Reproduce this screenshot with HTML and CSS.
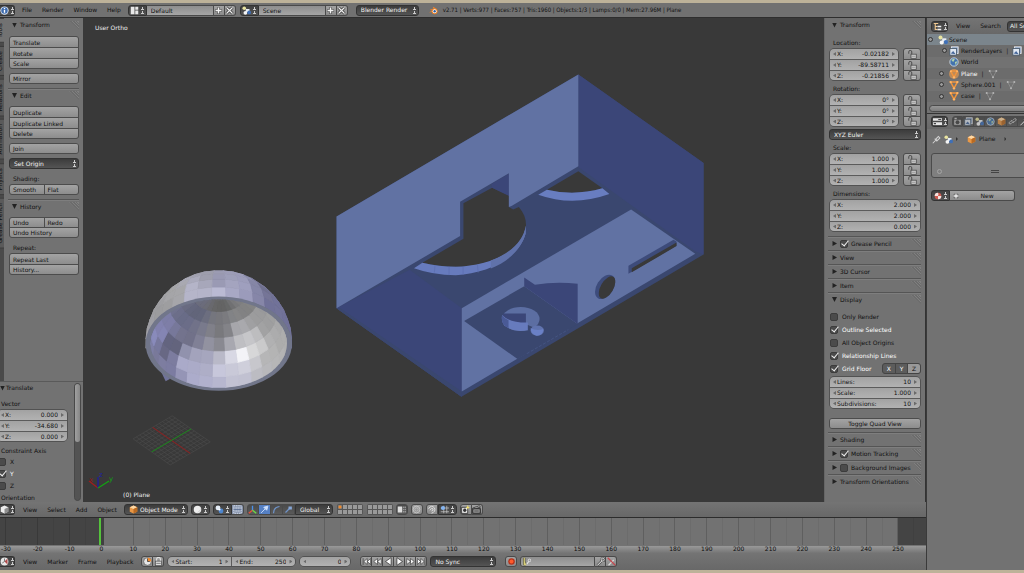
FILE: index.html
```html
<!DOCTYPE html>
<html lang="en">
<head>
<meta charset="utf-8">
<title>Blender</title>
<link rel="stylesheet" href="styles.css">
</head>
<body>
<svg class="defs" aria-hidden="true">
  <symbol id="i-info" viewBox="0 0 12 12"><circle cx="6" cy="6" r="5.500" fill="#dfe8f4"/><circle cx="6" cy="6" r="4.300" fill="#3f6cae"/><path d="M6 5.200V9M6 2.800V4.200" stroke="#fff" stroke-width="1.800"/></symbol>
  <symbol id="i-layout" viewBox="0 0 12 12"><path d="M1 1H6V11H1ZM7 1H11V5H7ZM7 6H11V11H7Z" fill="#e8e8e8"/></symbol>
  <symbol id="i-scene" viewBox="0 0 12 12"><circle cx="3" cy="3" r="2.400" fill="#e9e4a0"/><rect x="5" y="4" width="5" height="4" fill="#e9eef4"/><circle cx="4.500" cy="9" r="2.500" fill="#f4f4f4"/><circle cx="9.500" cy="8.500" r="2.500" fill="#3f70b8"/></symbol>
  <symbol id="i-plus" viewBox="0 0 12 12"><path d="M6 1.500V10.500M1.500 6H10.500" stroke="#444" stroke-width="3.600"/><path d="M6 2V10M2 6H10" stroke="#f2f2f2" stroke-width="2"/></symbol>
  <symbol id="i-x" viewBox="0 0 12 12"><path d="M2 2L10 10M10 2L2 10" stroke="#3a3a3a" stroke-width="3.600"/><path d="M2 2L10 10M10 2L2 10" stroke="#eee" stroke-width="1.600"/></symbol>
  <symbol id="i-blender" viewBox="0 0 12 12"><path d="M0 9L5 5H2V4H7L5 2L6 1L11 5Z" fill="#e8812a"/><circle cx="7.500" cy="7" r="4" fill="#e8812a"/><circle cx="7.500" cy="7" r="2.600" fill="#fff"/><circle cx="7.500" cy="7" r="1.600" fill="#2d5f9e"/></symbol>
  <symbol id="i-tree" viewBox="0 0 12 12"><path d="M1 2H7M3 2V10H6M3 6H6" stroke="#f0c890" stroke-width="1.400" fill="none"/><path d="M6 6H11M6 10H11" stroke="#eee" stroke-width="1.800"/></symbol>
  <symbol id="i-props" viewBox="0 0 12 12"><path d="M0 1.500H12V5H0ZM0 7H12V10.500H0Z" fill="#e6e6e6"/><path d="M7 3.200H11M1 8.800H4" stroke="#444" stroke-width="1.400"/></symbol>
  <symbol id="i-cube" viewBox="0 0 12 12"><path d="M6 .8L11 3V9L6 11.400L1 9V3Z" fill="#e99846"/><path d="M6 .8L11 3L6 5.400L1 3Z" fill="#ffd9a6"/><path d="M6 5.400L11 3V9L6 11.400Z" fill="#b96a22"/></symbol>
  <symbol id="i-wcube" viewBox="0 0 12 12"><path d="M6 .8L11 3V9L6 11.400L1 9V3Z" fill="#ededed"/><path d="M6 5.400L11 3V9L6 11.400Z" fill="#8d8d8d"/></symbol>
  <symbol id="i-clock" viewBox="0 0 12 12"><circle cx="6" cy="6" r="5.200" fill="#e6e6e6" stroke="#555"/><path d="M6 6V1A5 5 0 0 1 11 6Z" fill="#ef8a2e"/><path d="M6 2V6H9" stroke="#333" fill="none"/></symbol>
  <symbol id="i-timeline" viewBox="0 0 12 12"><circle cx="6" cy="6" r="5.200" fill="#e6e6e6"/><path d="M6 6L10 2V10Z" fill="#b04848"/><path d="M6 2V6L3 8" stroke="#555" fill="none"/></symbol>
  <symbol id="i-lock" viewBox="0 0 12 12"><path d="M1 5V2.500A2 2 0 0 1 5 2.500V6" stroke="#444" stroke-width="1.200" fill="none"/><rect x="4" y="5.600" width="7" height="5.400" fill="#d4d4d4" stroke="#444"/><path d="M5 8.300H10" stroke="#666" stroke-width=".8"/></symbol>
  <symbol id="i-padlock" viewBox="0 0 12 12"><path d="M3.500 6V3A2.500 2.500 0 0 1 8.500 3V6" stroke="#e4e4e4" stroke-width="1.400" fill="none"/><rect x="2" y="5.500" width="8" height="6" fill="#ddd" stroke="#555"/><path d="M3 8.500H9" stroke="#666"/></symbol>
  <symbol id="i-sphere" viewBox="0 0 12 12"><circle cx="6" cy="6" r="5" fill="#ededed"/><path d="M10 4A5 5 0 0 1 4 10Q9 9 10 4" fill="#c8c8c8"/></symbol>
  <symbol id="i-pivot" viewBox="0 0 12 12"><circle cx="4" cy="3.800" r="3.200" fill="#e4ecf6"/><circle cx="8" cy="8" r="3.200" fill="#4d86cf"/><circle cx="6" cy="6" r="1.400" fill="#fff"/></symbol>
  <symbol id="i-manip" viewBox="0 0 12 12"><rect x="1" y="1" width="10" height="10" fill="none" stroke="#e8eef8" stroke-dasharray="2 1"/><path d="M1 6H11M3 3V9M9 3V9M6 3V9" stroke="#5f7396"/><path d="M2 4H10M2 8H10" stroke="#e8eef8"/></symbol>
  <symbol id="i-axes" viewBox="0 0 12 12"><path d="M6 7V1" stroke="#4a90e8" stroke-width="1.800"/><path d="M6 7L1 11" stroke="#e8503a" stroke-width="2"/><path d="M6 7L11 11" stroke="#6cd448" stroke-width="2"/></symbol>
  <symbol id="i-arrow" viewBox="0 0 12 12"><path d="M1.500 10.500L7 5M5 3L10.500 1.500L9 7Z" stroke="#cfe0fa" stroke-width="1.200" fill="#cfe0fa"/></symbol>
  <symbol id="i-arc" viewBox="0 0 12 12"><path d="M2 11Q2 3 10 2" stroke="#6f93c8" stroke-width="1.600" fill="none"/></symbol>
  <symbol id="i-scale" viewBox="0 0 12 12"><path d="M2 10L7 5" stroke="#6f93c8" stroke-width="1.600"/><rect x="6" y="2" width="4.500" height="4" fill="#86a6d6"/></symbol>
  <symbol id="i-shade" viewBox="0 0 12 12"><rect x="1" y="2" width="6" height="8" fill="#ddd"/><path d="M9 2V10M11 2V10" stroke="#ccc" stroke-dasharray="2 1"/></symbol>
  <symbol id="i-ring" viewBox="0 0 12 12"><circle cx="6" cy="6" r="4.500" fill="none" stroke="#d0d0d0"/><circle cx="6" cy="6" r="2.200" fill="none" stroke="#c4c4c4"/></symbol>
  <symbol id="i-magnet" viewBox="0 0 12 12"><path d="M2 5Q6-1 10 4Q12 9 6 11M4 7Q6 3 8 5Q9 8 6 8" fill="none" stroke="#dcdcdc" stroke-width="1.300"/></symbol>
  <symbol id="i-snap" viewBox="0 0 12 12"><path d="M5 1V11M9 1V11M1 4H12M1 9H12" stroke="#cfcfcf" stroke-width=".9"/><circle cx="4" cy="4" r="2.800" fill="#85b4f0"/></symbol>
  <symbol id="i-cam" viewBox="0 0 12 12"><rect x="1" y="3" width="10" height="8" fill="#b9b9b9" stroke="#333"/><circle cx="6" cy="7" r="2.600" fill="#444"/><rect x="2" y="1" width="3" height="2" fill="#ccc"/></symbol>
  <symbol id="i-camx" viewBox="0 0 12 12"><rect x="1" y="3" width="8" height="8" fill="#eee" stroke="#222"/><circle cx="5" cy="7" r="2.200" fill="#333"/><path d="M9 0L10 2.500L12 3L10 4L9.500 6L8 4L6 3L8 2.500Z" fill="#f2e06a"/></symbol>
  <symbol id="i-clap" viewBox="0 0 12 12"><path d="M1 5H11V11H1Z" fill="#9d9d9d" stroke="#222" stroke-width="1.400"/><path d="M1 4L10 1L11 3L2 5Z" fill="#eee" stroke="#222"/><path d="M3 8H9" stroke="#333"/></symbol>
  <symbol id="i-first" viewBox="0 0 12 12"><path d="M1.500 1.500V10.500M7 2L2.500 6L7 10ZM11.500 2L7 6L11.500 10Z" fill="#f4f4f4" stroke="#3c3c3c" stroke-width=".9"/></symbol>
  <symbol id="i-prev" viewBox="0 0 12 12"><path d="M6 2L1 6L6 10ZM11 2L6 6L11 10Z" fill="#f4f4f4" stroke="#3c3c3c" stroke-width=".9"/></symbol>
  <symbol id="i-rev" viewBox="0 0 12 12"><path d="M9.500 .8L2 6L9.500 11.200Z" fill="#fafafa" stroke="#333"/></symbol>
  <symbol id="i-pin" viewBox="0 0 12 12"><path d="M1 11L5 7M3.500 5L7 8.500M5 5.500L8.500 2L10.500 4L7 7.500Z" stroke="#d4d4d4" stroke-width="1.400" fill="#777"/></symbol>
  <symbol id="i-rl" viewBox="0 0 12 12"><rect x="3" y="1" width="8" height="8" fill="#8ca4c8" stroke="#eee"/><rect x="1" y="3" width="8" height="8" fill="#dfe7f2" stroke="#456"/><path d="M2 9L5 6L8 10" fill="#47689c"/></symbol>
  <symbol id="i-world" viewBox="0 0 12 12"><circle cx="6" cy="6" r="5" fill="#4373ae" stroke="#d5dfea"/><path d="M3 4Q5 1 7 3L5 6ZM7 6L10 5L8 10Z" fill="#b5d3a8"/></symbol>
  <symbol id="i-mesh" viewBox="0 0 12 12"><path d="M2 2.500H10L6 10Z" fill="none" stroke="#f0943c" stroke-width="1.800"/><circle cx="2" cy="2.500" r="1.400" fill="#ffb668"/><circle cx="10" cy="2.500" r="1.400" fill="#ffb668"/><circle cx="6" cy="10" r="1.400" fill="#ffb668"/></symbol>
  <symbol id="i-gmesh" viewBox="0 0 12 12"><path d="M2 2.500H10L6 10Z" fill="none" stroke="#959595" stroke-width=".8"/><circle cx="2" cy="2.500" r="1.200" fill="#b4b4b4"/><circle cx="10" cy="2.500" r="1.200" fill="#b4b4b4"/><circle cx="6" cy="10" r="1.200" fill="#b4b4b4"/></symbol>
  <symbol id="i-mat" viewBox="0 0 12 12"><circle cx="6" cy="6" r="5" fill="#d05a50"/><path d="M6 1A5 5 0 0 1 6 6H1A5 5 0 0 1 6 1M6 6H11A5 5 0 0 1 6 11Z" fill="#f3e4e0"/></symbol>
  <symbol id="i-chain" viewBox="0 0 12 12"><path d="M1 8L4 5Q6 4 7 6L4 9Q2 10 1 8M5 6Q6 8 8 7L11 4Q11 2 9 2L7 4" fill="none" stroke="#c8c8c8" stroke-width="1.200"/></symbol>
  <symbol id="i-key" viewBox="0 0 12 12"><path d="M2 11L8 5" stroke="#444" stroke-width="3"/><circle cx="9" cy="3.500" r="2" fill="none" stroke="#444" stroke-width="2.600"/><path d="M2 11L8 5" stroke="#e8e8e8" stroke-width="1.400"/><circle cx="9" cy="3.500" r="2" fill="none" stroke="#e8e8e8" stroke-width="1.200"/></symbol>
  <symbol id="i-ykey" viewBox="0 0 12 12"><path d="M3 1V11M3 6L5 11" stroke="#4c4a30" stroke-width="3"/><path d="M3 1V11M3 6L5 11" stroke="#d8cf7c" stroke-width="1.600"/><path d="M6 10L9 6" stroke="#eee" stroke-width="1.400"/><circle cx="10" cy="4.500" r="1.700" fill="none" stroke="#eee"/></symbol>
  <symbol id="i-keyx" viewBox="0 0 12 12"><path d="M2 11L9 4" stroke="#ddd" stroke-width="1.500"/><path d="M1 1L11 11" stroke="#c4484e" stroke-width="1.700"/></symbol>
  <symbol id="i-rec" viewBox="0 0 12 12"><circle cx="6" cy="6" r="4.400" fill="#b5331c"/><circle cx="6" cy="6" r="2.600" fill="#ff5a2b"/></symbol>
</svg>

<div class="app">
<header class="bar topbar">
  <button class="dark ed" aria-label="Editor type"><svg><use href="#i-info"/></svg><i class="ud"></i></button>
  <nav class="menus"><a href="#">File</a><a href="#">Render</a><a href="#">Window</a><a href="#">Help</a></nav>
  <div class="join id-block"><button class="dark sel" aria-label="Screen layout"><svg><use href="#i-layout"/></svg><i class="ud"></i></button><input class="field" aria-label="Layout name" value="Default"><button class="ico" aria-label="Add layout"><svg><use href="#i-plus"/></svg></button><button class="ico" aria-label="Delete layout"><svg><use href="#i-x"/></svg></button></div>
  <div class="join id-block"><button class="dark sel" aria-label="Scene list"><svg><use href="#i-scene"/></svg><i class="ud"></i></button><input class="field" aria-label="Scene name" value="Scene"><button class="ico" aria-label="Add scene"><svg><use href="#i-plus"/></svg></button><button class="ico" aria-label="Delete scene"><svg><use href="#i-x"/></svg></button></div>
  <span class="pick engine"><select aria-label="Render engine"><option>Blender Render</option></select><i class="ud"></i></span>
  <svg class="logo"><use href="#i-blender"/></svg>
  <span class="stats">v2.71 | Verts:977 | Faces:757 | Tris:1960 | Objects:1/3 | Lamps:0/0 | Mem:27.96M | Plane</span>
</header>

<main class="dock">
<div class="left">
  <div class="workspace">
    <aside class="shelf">
      <div class="shelf-top">
        <nav class="tabs"><a href="#" class="on">Tools</a><a href="#">Create</a><a href="#">Relations</a><a href="#">Animation</a><a href="#">Physics</a><a href="#">Grease Pencil</a></nav>
        <div class="panels">
          <section class="panel"><h2>Transform</h2><div class="body">
            <div class="stack"><button>Translate</button><button>Rotate</button><button>Scale</button></div>
            <div class="stack"><button>Mirror</button></div>
          </div></section>
          <section class="panel"><h2>Edit</h2><div class="body">
            <div class="stack"><button>Duplicate</button><button>Duplicate Linked</button><button>Delete</button></div>
            <div class="stack"><button>Join</button></div>
            <span class="pick"><select aria-label="Set Origin"><option>Set Origin</option></select><i class="ud"></i></span>
            <div><p class="cap">Shading:</p>
            <div class="stack two"><button>Smooth</button><button>Flat</button></div></div>
          </div></section>
          <section class="panel"><h2>History</h2><div class="body">
            <div class="stack two"><button>Undo</button><button>Redo</button><button class="wide">Undo History</button></div>
            <div><p class="cap">Repeat:</p>
            <div class="stack"><button>Repeat Last</button><button>History...</button></div></div>
          </div></section>
        </div>
      </div>
      <section class="operator">
        <div class="op-main"><h2>Translate</h2>
          <p class="cap">Vector</p>
          <div class="nums"><label><span>X:</span><input value="0.000"></label><label><span>Y:</span><input value="-34.680"></label><label><span>Z:</span><input value="0.000"></label></div>
          <p class="cap">Constraint Axis</p>
          <label class="chk"><input type="checkbox"><span>X</span></label>
          <label class="chk"><input type="checkbox" checked><span>Y</span></label>
          <label class="chk"><input type="checkbox"><span>Z</span></label>
          <p class="cap">Orientation</p>
        </div>
        <div class="scroll"><i></i></div>
      </section>
    </aside>

    <svg class="scene" viewBox="83 18 741 483" preserveAspectRatio="xMinYMin slice" role="img" aria-label="3D viewport">
      <g id="floor"></g>
      <path d="M160 369L165.500 380.500L170 378Z" fill="#70739a"/>
      <g id="dome"></g>
      <g transform="translate(325 60) scale(.3333)">
        <path d="M757 43L1132 308V582L407 1008L33 743V468Z" fill="#3a476f"/>
        <path d="M757 43L1132 308V582L1107 572L757 320Z" fill="#3b4678"/>
        <path d="M33 743L252 628L408 743V1008Z" fill="#3b4678"/>
        <path d="M33 743L407 1008L408 992L45 743Z" fill="#3a476f"/>
        <path d="M413 429L499 382L549 406V440L562 447L579 440C596 460 602 480 600 500C585 570 500 615 400 619Q340 619 290 607L413 535Z" fill="#393939"/>
        <path d="M499 382L549 406V340L497 371Z" fill="#3b4678"/>
        <path d="M290 607Q340 619 390 619C500 615 592 570 600 495L599 520C580 590 490 640 390 644Q320 643 265 623Z" fill="#677bbd"/>
        <path d="M495 600C560 575 592 540 600 495L599 520C582 575 540 605 495 624Z" fill="#6072aa"/>
        <path d="M328 614L326 636M370 619V644M412 618V643M455 612L457 636" stroke="#5b6eae" stroke-width="2"/>
        <path d="M757 333L829 384Q745 408 663 388Z" fill="#393939"/>
        <path d="M663 388Q745 408 829 384L850 401Q740 440 637 403Z" fill="#687dc0"/>
        <path d="M33 468L757 43V318L557 437L549 440V339L403 424V527L33 743Z" fill="#6172a3"/>
        <path d="M408 743L915 447L1107 580L408 992Z" fill="#6172a3"/>
        <path d="M415 781L595 677L755 790L575 895Z" fill="#3a476f"/>
        <path d="M595 651L627 673Q690 662 755 670V790L595 677Z" fill="#3b4678"/>
        <path d="M603 879L727 807" stroke="#4a5a8a" stroke-width="2" stroke-dasharray="9 5"/>
        <ellipse cx="585" cy="775" rx="56" ry="36" fill="#5c6ea2"/>
        <path d="M532 759H600V788Q560 793 530 775Z" fill="#3b4678"/>
        <path d="M529 763Q550 787 606 786V808Q570 819 535 795Q525 780 529 763Z" fill="#677bbd"/>
        <path d="M529 763Q535 773 548 779V803Q522 790 529 763Z" fill="#4a5a96"/>
        <path d="M606 793L620 799L622 810L606 808Z" fill="#3a476f"/>
        <ellipse cx="634" cy="810" rx="20" ry="15" fill="#6073ae"/><path d="M614 803Q634 812 652 805Q652 825 632 825Q616 822 614 803Z" fill="#6a80c6"/>
        <ellipse cx="837" cy="679" rx="25" ry="40" transform="rotate(32 837 679)" fill="#3d4c7c"/>
        <ellipse cx="843" cy="681" rx="19" ry="37" transform="rotate(30 843 681)" fill="#393939"/>
        <path d="M907 616L1042 538L1051 543V556L907 640Z" fill="#3d4b7a"/>
        <path d="M917 623L1051 546V557L917 635Z" fill="#393939"/>
      </g>
      <g fill="none" stroke-width="1.200"><path d="M98 487L89 480" stroke="#a31d1d"/><path d="M98 487V476" stroke="#1c1ca8"/><path d="M98 487L109 480" stroke="#12a512"/></g>
      <g class="axis"><text x="89" y="481" fill="#8f1c1c">x</text><text x="99" y="476" fill="#2020a8">z</text><text x="109" y="480" fill="#12a512">y</text></g>
      <g class="hud"><text x="95" y="30">User Ortho</text><text x="123" y="496">(0) Plane</text></g>
    </svg>

    <aside class="side">
      <section class="panel"><h2>Transform</h2><div class="body tight">
        <p class="cap">Location:</p>
        <div class="locked"><div class="nums"><label><span>X:</span><input value="-0.02182"></label><label><span>Y:</span><input value="-89.58711"></label><label><span>Z:</span><input value="-0.21856"></label></div>
        <div class="stack locks"><button aria-label="Lock X"><svg><use href="#i-lock"/></svg></button><button aria-label="Lock Y"><svg><use href="#i-lock"/></svg></button><button aria-label="Lock Z"><svg><use href="#i-lock"/></svg></button></div></div>
        <p class="cap gap">Rotation:</p>
        <div class="locked"><div class="nums"><label><span>X:</span><input value="0°"></label><label><span>Y:</span><input value="0°"></label><label><span>Z:</span><input value="0°"></label></div>
        <div class="stack locks"><button aria-label="Lock X"><svg><use href="#i-lock"/></svg></button><button aria-label="Lock Y"><svg><use href="#i-lock"/></svg></button><button aria-label="Lock Z"><svg><use href="#i-lock"/></svg></button></div></div>
        <span class="pick gap"><select aria-label="Rotation mode"><option>XYZ Euler</option></select><i class="ud"></i></span>
        <p class="cap gap">Scale:</p>
        <div class="locked"><div class="nums"><label><span>X:</span><input value="1.000"></label><label><span>Y:</span><input value="1.000"></label><label><span>Z:</span><input value="1.000"></label></div>
        <div class="stack locks"><button aria-label="Lock X"><svg><use href="#i-lock"/></svg></button><button aria-label="Lock Y"><svg><use href="#i-lock"/></svg></button><button aria-label="Lock Z"><svg><use href="#i-lock"/></svg></button></div></div>
        <p class="cap gap">Dimensions:</p>
        <div class="nums"><label><span>X:</span><input value="2.000"></label><label><span>Y:</span><input value="2.000"></label><label><span>Z:</span><input value="0.000"></label></div>
      </div></section>
      <section class="panel shut"><h2><label class="chk"><input type="checkbox" checked><span>Grease Pencil</span></label></h2></section>
      <section class="panel shut"><h2>View</h2></section>
      <section class="panel shut"><h2>3D Cursor</h2></section>
      <section class="panel shut"><h2>Item</h2></section>
      <section class="panel"><h2>Display</h2><div class="body tight display">
        <label class="chk"><input type="checkbox"><span>Only Render</span></label>
        <label class="chk"><input type="checkbox" checked><span>Outline Selected</span></label>
        <label class="chk"><input type="checkbox"><span>All Object Origins</span></label>
        <label class="chk"><input type="checkbox" checked><span>Relationship Lines</span></label>
        <div class="floor-row"><label class="chk"><input type="checkbox" checked><span>Grid Floor</span></label><div class="xyz"><button class="on">X</button><button class="on">Y</button><button>Z</button></div></div>
        <div class="nums"><label><span>Lines:</span><input value="10"></label><label><span>Scale:</span><input value="1.000"></label><label><span>Subdivisions:</span><input value="10"></label></div>
        <div class="stack quad"><button>Toggle Quad View</button></div>
      </div></section>
      <section class="panel shut"><h2>Shading</h2></section>
      <section class="panel shut"><h2><label class="chk"><input type="checkbox" checked><span>Motion Tracking</span></label></h2></section>
      <section class="panel shut"><h2><label class="chk"><input type="checkbox"><span>Background Images</span></label></h2></section>
      <section class="panel shut"><h2>Transform Orientations</h2></section>
    </aside>
  </div>

  <div class="bar viewbar">
    <button class="dark ed" aria-label="Editor type"><svg><use href="#i-wcube"/></svg><i class="ud"></i></button>
    <nav class="menus"><a href="#">View</a><a href="#">Select</a><a href="#">Add</a><a href="#">Object</a></nav>
    <span class="pick mode"><svg><use href="#i-cube"/></svg><select aria-label="Mode"><option>Object Mode</option></select><i class="ud"></i></span>
    <button class="dark sel" aria-label="Viewport shading"><svg><use href="#i-sphere"/></svg><i class="ud"></i></button>
    <div class="join pivot"><button class="dark sel" aria-label="Pivot"><svg><use href="#i-pivot"/></svg><i class="ud"></i></button><button class="ico blue" aria-label="Manipulate centers"><svg><use href="#i-manip"/></svg></button></div>
    <div class="join"><button class="ico dk" aria-label="Manipulator"><svg><use href="#i-axes"/></svg></button><button class="ico blue" aria-label="Translate"><svg><use href="#i-arrow"/></svg></button><button class="ico dk" aria-label="Rotate"><svg><use href="#i-arc"/></svg></button><button class="ico dk" aria-label="Scale"><svg><use href="#i-scale"/></svg></button><span class="pick orient"><select aria-label="Orientation"><option>Global</option></select><i class="ud"></i></span></div>
    <div class="layers"><i class="dot"></i><i></i><i></i><i></i><i></i><i></i><i></i><i></i><i></i><i></i></div>
    <div class="layers"><i></i><i></i><i></i><i></i><i></i><i></i><i></i><i></i><i></i><i></i></div>
    <div class="join"><button class="ico dk" aria-label="Lock camera"><svg><use href="#i-shade"/></svg></button></div>
    <div class="join"><button class="ico" aria-label="Proportional edit"><svg><use href="#i-ring"/></svg></button></div>
    <div class="join"><button class="ico" aria-label="Snap"><svg><use href="#i-magnet"/></svg></button><button class="dark sel" aria-label="Snap element"><svg><use href="#i-snap"/></svg><i class="ud"></i></button></div>
    <div class="join"><button class="ico" aria-label="Render image"><svg><use href="#i-camx"/></svg></button><button class="ico" aria-label="Render animation"><svg><use href="#i-clap"/></svg></button></div>
  </div>

  <div class="timeline"><div class="ticks" id="ticks"></div></div>

  <div class="bar timebar">
    <button class="dark ed" aria-label="Editor type"><svg><use href="#i-timeline"/></svg><i class="ud"></i></button>
    <nav class="menus"><a href="#">View</a><a href="#">Marker</a><a href="#">Frame</a><a href="#">Playback</a></nav>
    <div class="join"><button class="ico" aria-label="Preview range"><svg><use href="#i-clock"/></svg></button><button class="ico" aria-label="Lock time"><svg><use href="#i-padlock"/></svg></button></div>
    <div class="nums range"><label><span>Start:</span><input value="1"></label><label><span>End:</span><input value="250"></label></div>
    <div class="nums frame"><label><input aria-label="Current frame" value="0"></label></div>
    <div class="join play"><button class="ico" aria-label="First"><svg><use href="#i-first"/></svg></button><button class="ico" aria-label="Previous key"><svg><use href="#i-prev"/></svg></button><button class="ico" aria-label="Play reverse"><svg><use href="#i-rev"/></svg></button><button class="ico flip" aria-label="Play"><svg><use href="#i-rev"/></svg></button><button class="ico flip" aria-label="Next key"><svg><use href="#i-prev"/></svg></button><button class="ico flip" aria-label="Last"><svg><use href="#i-first"/></svg></button></div>
    <span class="pick sync"><select aria-label="Sync"><option>No Sync</option></select><i class="ud"></i></span>
    <div class="join rec"><button class="ico" aria-label="Record"><svg><use href="#i-rec"/></svg></button></div>
    <div class="join"><span class="field keyset"><svg><use href="#i-ykey"/></svg><input aria-label="Keying set"></span><button class="ico" aria-label="Insert key"><svg><use href="#i-key"/></svg></button><button class="ico" aria-label="Delete key"><svg><use href="#i-keyx"/></svg></button></div>
  </div>
</div>

<div class="right">
  <div class="bar outbar">
    <button class="dark sel" aria-label="Editor type"><svg><use href="#i-tree"/></svg><i class="ud"></i></button>
    <nav class="menus"><a href="#">View</a><a href="#">Search</a></nav>
    <button class="dark all">All Scenes</button>
  </div>
  <ul class="tree">
    <li class="root"><i class="node"></i><svg><use href="#i-scene"/></svg>Scene</li>
    <li class="c1"><i class="node"></i><svg><use href="#i-rl"/></svg>RenderLayers<b>|</b><svg><use href="#i-rl"/></svg></li>
    <li class="c1"><i class="node none"></i><svg><use href="#i-world"/></svg>World</li>
    <li class="c2 act"><i class="node"></i><svg><use href="#i-mesh"/></svg>Plane<b>|</b><svg><use href="#i-gmesh"/></svg></li>
    <li class="c2"><i class="node"></i><svg><use href="#i-mesh"/></svg>Sphere.001<b>|</b><svg><use href="#i-gmesh"/></svg></li>
    <li class="c2"><i class="node"></i><svg><use href="#i-mesh"/></svg>case<b>|</b><svg><use href="#i-gmesh"/></svg></li>
  </ul>
  <div class="hscroll"></div>
  <div class="bar propbar">
    <button class="dark sel" aria-label="Editor type"><svg><use href="#i-props"/></svg><i class="ud"></i></button>
    <div class="join ctx"><button class="ico dk" aria-label="Render"><svg><use href="#i-cam"/></svg></button><button class="ico dk" aria-label="Render layers"><svg><use href="#i-rl"/></svg></button><button class="ico dk" aria-label="Scene"><svg><use href="#i-scene"/></svg></button><button class="ico dk" aria-label="World"><svg><use href="#i-world"/></svg></button><button class="ico dk" aria-label="Object"><svg><use href="#i-cube"/></svg></button><button class="ico dk" aria-label="Constraints"><svg><use href="#i-chain"/></svg></button><button class="ico dk" aria-label="Modifiers"><svg><use href="#i-key"/></svg></button></div>
  </div>
  <div class="crumbs"><svg><use href="#i-pin"/></svg><svg><use href="#i-scene"/></svg><i class="tri"></i><svg class="obj"><use href="#i-cube"/></svg><span>Plane</span><i class="tri far"></i></div>
  <div class="slots"><i class="add"></i><i class="handle"></i></div>
  <div class="join newmat"><button class="dark sel" aria-label="Browse material"><svg><use href="#i-mat"/></svg><i class="ud"></i></button><button class="new"><svg><use href="#i-plus"/></svg><span>New</span></button></div>
</div>
</main>
</div>
<script src="app.js"></script>
</body>
</html>
```

FILE: styles.css
```css
* { box-sizing: border-box; margin: 0; padding: 0; }
body { background: #bdb299; font-family: "DejaVu Sans", sans-serif; font-size: 6px; line-height: 8px; color: #111; }
button, input, select { font: inherit; color: inherit; border: 0; background: none; min-width: 0; }
a { color: inherit; text-decoration: none; }
ul { list-style: none; }
h2 { font: inherit; }
.defs { position: absolute; width: 0; height: 0; }
.app { display: flex; flex-direction: column; min-height: 100vh; padding: 3px 0 4px; overflow: hidden; }
.dock { flex: 1; display: flex; }
.left { flex: 1; min-width: 0; display: flex; flex-direction: column; }
.workspace { flex: 1; display: flex; background: #393939; }

.bar { display: flex; align-items: center; background: linear-gradient(#747474, #686868); white-space: nowrap; }
.bar svg { width: 9px; height: 9px; flex: none; }
.topbar { height: 15px; border-bottom: 1px solid #2e2e2e; background: #717171; }
.menus { display: flex; gap: 10px; padding: 0 7px; }
.dark { display: flex; align-items: center; justify-content: center; gap: 2px; height: 11px; background: linear-gradient(#404040, #545454); border: 1px solid #333; border-radius: 3px; color: #eee; }
.ed { width: 15px; border-left: 0; border-radius: 0 3px 3px 0; }
.sel { width: 19px; }
.ud { flex: none; width: 3px; height: 7px; background:
  conic-gradient(from 150deg at 50% 0, #ccc 60deg, transparent 0) 0 100% / 3px 3px no-repeat,
  conic-gradient(from 150deg at 50% 0, #ccc 60deg, transparent 0) 0 0 / 3px 3px no-repeat; }
.join { display: flex; align-items: center; }
.join > * { border-radius: 0; }
.join > :first-child { border-radius: 3px 0 0 3px; }
.join > :last-child { border-radius: 0 3px 3px 0; }
.join > :only-child { border-radius: 3px; }
.field { height: 11px; width: 67px; padding: 0 4px; background: linear-gradient(#8e8e8e, #a6a6a6); border: 1px solid #4a4a4a; border-left: 0; }
.ico { display: flex; align-items: center; justify-content: center; width: 11px; height: 11px; background: linear-gradient(#a2a2a2, #8b8b8b); border: 1px solid #4a4a4a; border-left-width: 0; }
.ico:first-child { border-left-width: 1px; width: 12px; }
.ico.dk { background: linear-gradient(#4a4a4a, #5a5a5a); width: 12px; }
.ico.blue { background: #5580c4; width: 12px; }
.pivot .ico.blue { background: #8794ac; }
.flip svg { transform: scaleX(-1); }
.id-block { margin-right: 4px; }
.pick { display: flex; align-items: center; height: 11px; padding: 0 2px 0 4px; background: linear-gradient(#3c3c3c, #545454); border: 1px solid #333; border-radius: 3px; color: #f2f2f2; }
.pick select { appearance: none; flex: 1; width: 100%; outline: none; }
.engine { width: 63px; margin-left: 4px; }
.logo { margin: 0 5px 0 10px; }
.stats { font-family: "DejaVu Sans Condensed", "DejaVu Sans", sans-serif; font-stretch: condensed; }

.shelf { flex: none; width: 83px; display: flex; flex-direction: column; justify-content: space-between; background: #727272; }
.shelf-top { display: flex; }
.tabs { flex: none; width: 4px; overflow: hidden; display: flex; flex-direction: column; align-items: flex-end; gap: 3px; background: #4a4a4a; height: 363px; }
.tabs a { writing-mode: vertical-rl; transform: rotate(180deg); background: #5a5a5a; padding: 4px 0; border: 1px solid #3a3a3a; border-width: 1px 0; }
.tabs .on { background: #727272; }
.panels { flex: 1; padding: 0 4px; }
.panel + .panel { border-top: 1px solid #555; box-shadow: inset 0 1px #7e7e7e; }
.panel h2, .operator h2 { display: flex; align-items: center; gap: 3px; height: 14px; padding-left: 4px; white-space: nowrap; }
.panel + .panel h2 { height: 13px; }
h2::before { content: ""; flex: none; width: 5px; height: 5px; background: #222; clip-path: polygon(0 0, 100% 0, 50% 100%); }
.shut h2::before { clip-path: polygon(10% 0, 100% 50%, 10% 100%); }
.panel h2::after { content: ""; margin-left: auto; width: 10px; height: 9px; background: repeating-linear-gradient(45deg, #898989 0 1px, #686868 1px 2px); clip-path: polygon(0 0, 100% 0, 100% 100%); opacity: .6; }
.body { display: flex; flex-direction: column; gap: 4px; padding: 4px 0 4px 1px; }
.cap { height: 11px; line-height: 11px; padding-left: 4px; }
.stack { display: grid; gap: 1px; border: 1px solid #4c4c4c; border-radius: 3px; background: #4c4c4c; overflow: hidden; }
.stack button { height: 10px; line-height: 9px; text-align: left; padding-left: 3px; background: linear-gradient(#a3a3a3, #8d8d8d); }
.stack button:last-child { height: 9px; }
.two { grid-template-columns: 1fr 1fr; }
.two button:not(.wide) { height: 9px; }
.wide { grid-column: 1 / 3; }

.operator { display: flex; height: 121px; overflow: hidden; border-top: 1px solid #5a5a5a; }
.op-main { flex: 1; }
.operator h2 { height: 12px; gap: 1px; padding-left: 0; margin-bottom: 4px; }
.op-main .cap { padding-left: 1px; }
.op-main .nums { margin: 0 0 3px -3px; }
.op-main .nums label { padding-left: 3px; }
.op-main .chk { height: 12px; margin-left: -3px; gap: 4px; }
.scroll { flex: none; width: 7px; height: 118px; margin: 1px 2px 0 6px; border-radius: 4px; background: #535353; border: 1px solid #484848; }
.scroll i { display: block; height: 58px; border-radius: 4px; background: linear-gradient(90deg, #a0a0a0, #868686); }

.nums { display: grid; gap: 1px; background: #5b5b5b; border: 1px solid #525252; border-radius: 5px; overflow: hidden; }
.nums label { display: flex; align-items: center; height: 10px; padding: 0 3px; background: linear-gradient(#a2a2a2, #b2b2b2); }
.nums label:last-child { height: 9px; }
.nums label::before, .nums label::after { content: ""; flex: none; width: 3px; height: 4px; background: #6a6a6a; clip-path: polygon(0 50%, 100% 0, 100% 100%); }
.nums label::after { clip-path: polygon(100% 50%, 0 0, 0 100%); }
.nums span { margin-left: 1px; }
.nums input { flex: 1; width: 0; height: 8px; text-align: right; padding-right: 3px; }

.scene { flex: 1; min-width: 0; }
.axis { font-size: 7px; }
.hud { fill: #f0f0f0; }

.side { flex: none; width: 102px; padding: 0 4px 12px 3px; background: #727272; border-left: 1px solid #666; border-right: 1px solid #333; }
.tight { gap: 0; padding: 5px 0 4px 1px; }
.display { padding: 4px 0 3px 1px; }
.gap { margin-top: 2px; }
.locked { display: grid; grid-template-columns: 1fr 18px; gap: 4px; }
.locks button { display: flex; justify-content: center; align-items: center; padding: 0; }
.locks svg { width: 9px; height: 9px; }
.chk { display: flex; align-items: center; gap: 4px; height: 13px; }
.chk input { appearance: none; flex: none; width: 8px; height: 8px; margin-left: 1px; border-radius: 2px; border: 1px solid #3c3c3c; background: #4b4b4b; position: relative; }
.chk input:checked::after { content: ""; position: absolute; left: 2px; top: -2px; width: 3px; height: 6px; border: solid #f2f2f2; border-width: 0 1px 1px 0; transform: rotate(40deg); }
.body .chk input:checked + span, .op-main .chk input:checked + span { color: #fff; }
h2 .chk { gap: 3px; }
h2 .chk input { margin-left: 0; }
.floor-row { display: flex; justify-content: space-between; align-items: center; margin-bottom: 1px; }
.xyz { display: grid; grid-template-columns: repeat(3, 1fr); gap: 1px; width: 39px; background: #444; border: 1px solid #444; border-radius: 3px; overflow: hidden; }
.xyz button { height: 9px; background: #999; }
.xyz .on { background: #5c5c5c; color: #fff; }
.quad { margin-top: 9px; }
.quad button { text-align: center; padding: 0; }

.viewbar { height: 16px; border-bottom: 1px solid #2c2c2c; gap: 3px; }
.viewbar .ed, .timebar .ed { margin-right: -3px; }
.viewbar .menus, .timebar .menus { padding-left: 8px; padding-right: 4px; }
.mode { width: 64px; }
.mode select { margin-left: 2px; }
.orient { width: 38px; }
.layers { display: grid; grid-template-columns: repeat(5, 4px); grid-template-rows: 4px 4px; gap: 1px; padding: 1px; height: 11px; margin-left: 1px; background: #555; border-radius: 2px; }
.layers i { background: #999; }
.layers .dot { background: radial-gradient(circle, #f08a2c 1px, #777 2px); }

.timeline { height: 35px; background: linear-gradient(90deg, #444 10.9%, #727272 0 97%, #444 0); }
.ticks { display: flex; height: 35px; padding-right: 12px; overflow: hidden; background: linear-gradient(transparent 27px, #4d4d4d 27px, #999 28px, #757575); }
.tick { flex: 1; min-width: 0; display: flex; flex-direction: column; align-items: center; line-height: 8px; color: #0c0c0c; }
.tick::before { content: ""; width: 1px; height: 27px; flex: none; background: rgba(0, 0, 0, .16); box-shadow: 16px 0 rgba(0, 0, 0, .05); }
.tick:first-child { margin-left: -10px; }
.tick.now::before { width: 5px; background: linear-gradient(90deg, #55c23c 2px, #404040 0); box-shadow: none; }

.timebar { height: 17px; gap: 3px; }
.timebar .menus + .join { margin-left: 1px; }
.range { grid-template-columns: 1fr 1fr; width: 129px; }
.range label, .frame label { height: 9px; }
.frame { width: 52px; margin-right: 6px; }
.sync { width: 66px; }
.rec { margin-left: 6px; }
.keyset { display: flex; align-items: center; width: 75px; padding: 0 1px; border-left: 1px solid #4a4a4a; }
.keyset input { flex: 1; }

.right { flex: none; width: 98px; overflow: hidden; background: #727272; border-left: 1px solid #3a3a3a; }
.outbar { height: 16px; padding-left: 4px; }
.outbar .sel, .propbar .sel { flex: none; width: 17px; }
.outbar .menus { padding: 0 6px 0 8px; }
.all { flex: none; width: 40px; justify-content: flex-start; padding-left: 2px; }
.tree { display: grid; grid-auto-rows: 1fr; min-height: 68px; white-space: nowrap; }
.tree li { display: flex; align-items: center; gap: 1px; padding-left: 1px; }
.tree li:nth-child(even) { background: #6c6c6c; }
.tree .root { background: #7b858c; }
.tree .c1 { padding-left: 15px; gap: 2px; }
.tree .c2 { padding-left: 12px; gap: 2px; }
.tree .act { color: #fff; }
.tree .act svg:first-of-type { background: #bb8a5a; border-radius: 5px; }
.tree svg { width: 10px; height: 10px; flex: none; }
.tree b { font-weight: 400; margin: 0 2px; color: #222; }
.node { flex: none; width: 5px; height: 5px; border: 1px solid #333; border-radius: 3px; background: #999; }
.c2 .node { margin-right: 3px; }
.root .node { margin-right: 4px; }
.none { visibility: hidden; }
.hscroll { height: 7px; margin: 3px -8px 1px 2px; border-radius: 4px; border: 1px solid #4b4b4b; background: linear-gradient(#969696, #7c7c7c); }
.propbar { height: 16px; padding-left: 4px; gap: 4px; border-top: 1px solid #333; }
.ctx .ico { width: 11px; }
.ctx svg { opacity: .7; }
.crumbs { display: flex; align-items: center; gap: 3px; height: 20px; padding-left: 5px; }
.crumbs svg { width: 9px; height: 9px; }
.crumbs .obj { margin-left: 6px; }
.tri { width: 2px; height: 4px; background: #333; clip-path: polygon(0 0, 100% 50%, 0 100%); }
.far { margin-left: 6px; }
.slots { display: flex; align-items: flex-end; gap: 49px; height: 25px; margin: 4px -8px 12px 4px; padding: 0 0 3px 5px; background: #7f7f7f; border: 1px solid #4b4b4b; border-radius: 3px; }
.add { width: 5px; height: 5px; border: 1px solid #a5a5a5; border-radius: 3px; }
.handle { width: 8px; height: 3px; margin-bottom: 1px; border: solid #444; border-width: 1px 0; }
.newmat { margin: 0 9px 0 4px; }
.newmat svg { width: 8px; height: 8px; }
.new { flex: 1; display: flex; align-items: center; height: 11px; padding-left: 2px; background: linear-gradient(#a3a3a3, #8d8d8d); border: 1px solid #4a4a4a; border-left: 0; }
.new span { flex: 1; text-align: center; }
```

FILE: app.js
```js
const NS = "http://www.w3.org/2000/svg";

function shape(parent, name, attrs) {
  const el = document.createElementNS(NS, name);
  for (const key in attrs) el.setAttribute(key, attrs[key]);
  parent.appendChild(el);
  return el;
}

// Timeline labels
const ticks = document.getElementById("ticks");
for (let frame = -30; frame <= 250; frame += 10) {
  const tick = document.createElement("span");
  tick.className = frame === 0 ? "tick now" : "tick";
  tick.textContent = frame;
  ticks.appendChild(tick);
}

// Grid floor
const floor = document.getElementById("floor");
const lerp = (a, b, t) => [a[0] + (b[0] - a[0]) * t, a[1] + (b[1] - a[1]) * t];
const L = [133, 438], T = [172, 415], R = [210, 441], B = [170, 464];
const line = (p, q, stroke, width) => shape(floor, "line", { x1: p[0], y1: p[1], x2: q[0], y2: q[1], stroke, "stroke-width": width });
for (let i = 0; i <= 12; i++) {
  line(lerp(L, T, i / 12), lerp(B, R, i / 12), "#4c4c4c", 0.6);
  line(lerp(L, B, i / 12), lerp(T, R, i / 12), "#4c4c4c", 0.6);
}
line(lerp(L, T, 0.5), lerp(B, R, 0.5), "#8a2020", 1);
line(lerp(B, L, 0.5), lerp(R, T, 0.5), "#1b861b", 1);

// Faceted dome, open side toward the viewer; shades are blended from samples
const outer = [[100,170,156,156,158],[140,110,166,166,168],[230,55,158,158,172],[270,75,152,152,178],[270,110,187,187,212],[200,110,184,184,205],[330,110,168,168,198],[370,115,142,142,176],[420,150,112,113,152],[470,210,112,113,152],[60,220,160,160,166],[400,100,112,113,144]];
const inner = [[80,230,138,140,190],[120,270,93,93,118],[100,210,128,128,172],[160,190,105,108,135],[180,240,113,113,136],[200,170,98,101,122],[270,150,100,100,100],[340,160,130,130,130],[270,220,120,120,124],[270,260,136,136,144],[400,200,158,158,158],[440,260,172,172,172],[340,290,246,246,250],[300,300,216,216,228],[370,270,212,212,212],[330,250,190,190,194],[420,300,180,180,180],[170,320,178,178,208],[220,310,166,166,190],[270,350,200,200,220],[250,380,180,180,206],[340,350,208,208,220],[350,380,188,188,206],[200,370,172,172,204],[130,330,122,122,160],[400,350,184,184,186]];
function blend(samples, x, y) {
  let sum = 0, c = [0, 0, 0];
  for (const s of samples) {
    const w = 1 / (Math.hypot(s[0] - x, s[1] - y) ** 3 + 400);
    sum += w;
    for (let k = 0; k < 3; k++) c[k] += s[k + 2] * w;
  }
  return "rgb(" + c.map(v => Math.round(v / sum)).join() + ")";
}
const dome = document.getElementById("dome");
const cx = 218.5, cy = 343;
function project(r, lat, lon) {
  return [
    cx + r * Math.cos(lat) * Math.sin(lon),
    cy - r * (Math.sin(lat) * 0.768 + Math.cos(lat) * Math.cos(lon) * 0.64),
    Math.cos(lat) * Math.cos(lon) * 0.768 - Math.sin(lat) * 0.64
  ];
}
function facets(parent, r, samples, side) {
  const step = Math.PI / 16;
  for (let i = 0; i < 8; i++) for (let j = 0; j < 32; j++) {
    const a = i * step, b = a + step, c = (j - 0.5) * step, d = c + step;
    const q = [project(r, a, c), project(r, a, d), project(r, b, d), project(r, b, c)];
    const z = q.reduce((s, p) => s + p[2], 0) * side;
    if (z < -0.3) continue;
    const mx = q.reduce((s, p) => s + p[0], 0) / 4, my = q.reduce((s, p) => s + p[1], 0) / 4;
    const fill = blend(samples, (mx - 130) * 3, (my - 255) * 3);
    shape(parent, "polygon", { points: q.map(p => p[0].toFixed(1) + "," + p[1].toFixed(1)).join(" "), fill, stroke: fill, "stroke-width": 0.8 });
  }
}
facets(dome, 73, outer, 1);
shape(dome, "ellipse", { cx, cy, rx: 73, ry: 47, fill: "#71768a" });
const clip = shape(dome, "clipPath", { id: "opening" });
shape(clip, "ellipse", { cx, cy, rx: 68, ry: 44 });
facets(shape(dome, "g", { "clip-path": "url(#opening)" }), 69, inner, -1);
```
